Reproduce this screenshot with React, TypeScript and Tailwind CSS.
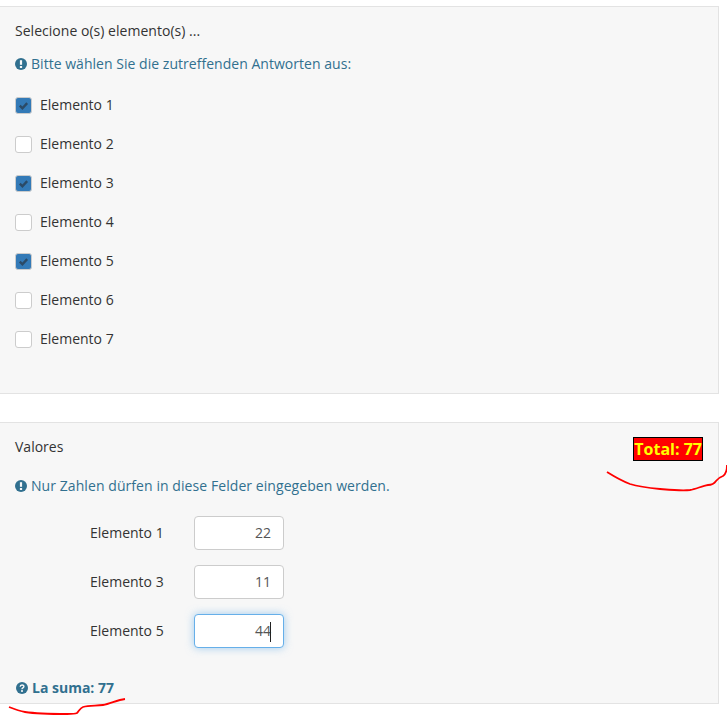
const items = [
  { label: "Elemento 1", checked: true },
  { label: "Elemento 2", checked: false },
  { label: "Elemento 3", checked: true },
  { label: "Elemento 4", checked: false },
  { label: "Elemento 5", checked: true },
  { label: "Elemento 6", checked: false },
  { label: "Elemento 7", checked: false },
];

const values = [
  { label: "Elemento 1", value: "22", focus: false },
  { label: "Elemento 3", value: "11", focus: false },
  { label: "Elemento 5", value: "44", focus: true },
];

function InfoIcon({ question }: { question?: boolean }) {
  return (
    <svg viewBox="0 0 12 12" className="h-3 w-3 shrink-0">
      <circle cx="6" cy="6" r="6" fill="#31708f" />
      {question ? (
        <path d="M4.2 4.8c0-2.3 3.7-2.3 3.7-.2 0 1.4-1.9 1.3-1.9 2.6" fill="none" stroke="#f7f7f7" strokeWidth="1.4" />
      ) : (
        <path d="M6 2.2v4.6" fill="none" stroke="#f7f7f7" strokeWidth="2.2" />
      )}
      <rect x={question ? 5.2 : 4.9} y="8" width={question ? 1.6 : 2.2} height="2" fill="#f7f7f7" />
    </svg>
  );
}

function Check({ checked }: { checked: boolean }) {
  return (
    <span
      className={
        checked
          ? "flex h-[17px] w-[17px] items-center justify-center rounded-[3px] border border-[#cccccc] bg-[#337ab7]"
          : "flex h-[17px] w-[17px] items-center justify-center rounded-[3px] border border-[#cccccc] bg-white"
      }
    >
      {checked && (
        <svg viewBox="0 0 12 12" className="h-[11px] w-[11px]">
          <path d="M2 6.2 4.8 9 10 3.4" fill="none" stroke="#2b4a66" strokeWidth="2.6" />
        </svg>
      )}
    </span>
  );
}

export default function App() {
  return (
    <div className="relative h-[715px] w-[727px] overflow-hidden bg-white pt-[6px] font-['Open_Sans',sans-serif] text-[14px] leading-5 text-[#333333]">
      <div className="-ml-px h-[388px] w-[720px] border border-[#e3e3e3] bg-[#f7f7f7] pl-[15px] pt-[14px]">
        <p className="tracking-[0.03px]">Selecione o(s) elemento(s) ...</p>
        <p className="mt-[13px] flex items-center gap-[4px] tracking-[0.03px] text-[#31708f]">
          <InfoIcon />
          Bitte wählen Sie die zutreffenden Antworten aus:
        </p>
        <div className="mt-[21px] flex flex-col gap-[19px]">
          {items.map((item) => (
            <label key={item.label} className="flex items-center gap-[8px]">
              <Check checked={item.checked} />
              {item.label}
            </label>
          ))}
        </div>
      </div>

      <div className="-ml-px mt-[28px] h-[282px] w-[720px] border border-[#e3e3e3] bg-[#f7f7f7] pl-[15px] pr-[15px] pt-[14px]">
        <div className="flex items-start justify-between">
          <p>Valores</p>
          <span className="border border-black bg-[#ff0000] text-[16px] leading-[22px] font-bold text-[#ffff00]">
            Total: 77
          </span>
        </div>
        <p className="mt-[15px] flex items-center gap-[4px] tracking-[0.07px] text-[#31708f]">
          <InfoIcon />
          Nur Zahlen dürfen in diese Felder eingegeben werden.
        </p>
        <div className="mt-[20px] flex flex-col gap-[15px]">
          {values.map((row) => (
            <div key={row.label} className="flex items-center">
              <span className="ml-[75px] w-[104px]">{row.label}</span>
              <div
                className={
                  row.focus
                    ? "relative h-[34px] w-[90px] rounded-[4px] border border-[#66afe9] bg-white pr-[12px] text-right leading-[32px] text-[#555555] shadow-[0_0_8px_rgba(102,175,233,0.6)]"
                    : "relative h-[34px] w-[90px] rounded-[4px] border border-[#cccccc] bg-white pr-[12px] text-right leading-[32px] text-[#555555]"
                }
              >
                {row.value}
                {row.focus && <span className="absolute right-[12px] top-[7px] h-[20px] w-px bg-[#222222]" />}
              </div>
            </div>
          ))}
        </div>
        <p className="ml-px mt-[30px] flex items-center gap-[4px] font-bold text-[#31708f]">
          <InfoIcon question />
          La suma: 77
        </p>
      </div>

      <svg className="absolute left-0 top-0 h-[715px] w-[727px]" viewBox="0 0 727 715" fill="none">
        <path
          d="M607 472C615 477 622 481 630 484C640 487 650 488 660 489C672 490 682 491 690 490C696 489 702 486 708 485C712 485 714 484 716 481C718 478 720 477 723 476C726 474 727 470 727 465"
          stroke="#ff0000"
          strokeWidth="1.8"
        />
        <path
          d="M9 707C14 709 19 711 25 712C38 714 54 714 67 714C72 714 75 714 77 713C79 711 80 708 83 707C89 705 96 706 103 705C110 704 117 700 125 699"
          stroke="#ff0000"
          strokeWidth="1.8"
        />
      </svg>
    </div>
  );
}
